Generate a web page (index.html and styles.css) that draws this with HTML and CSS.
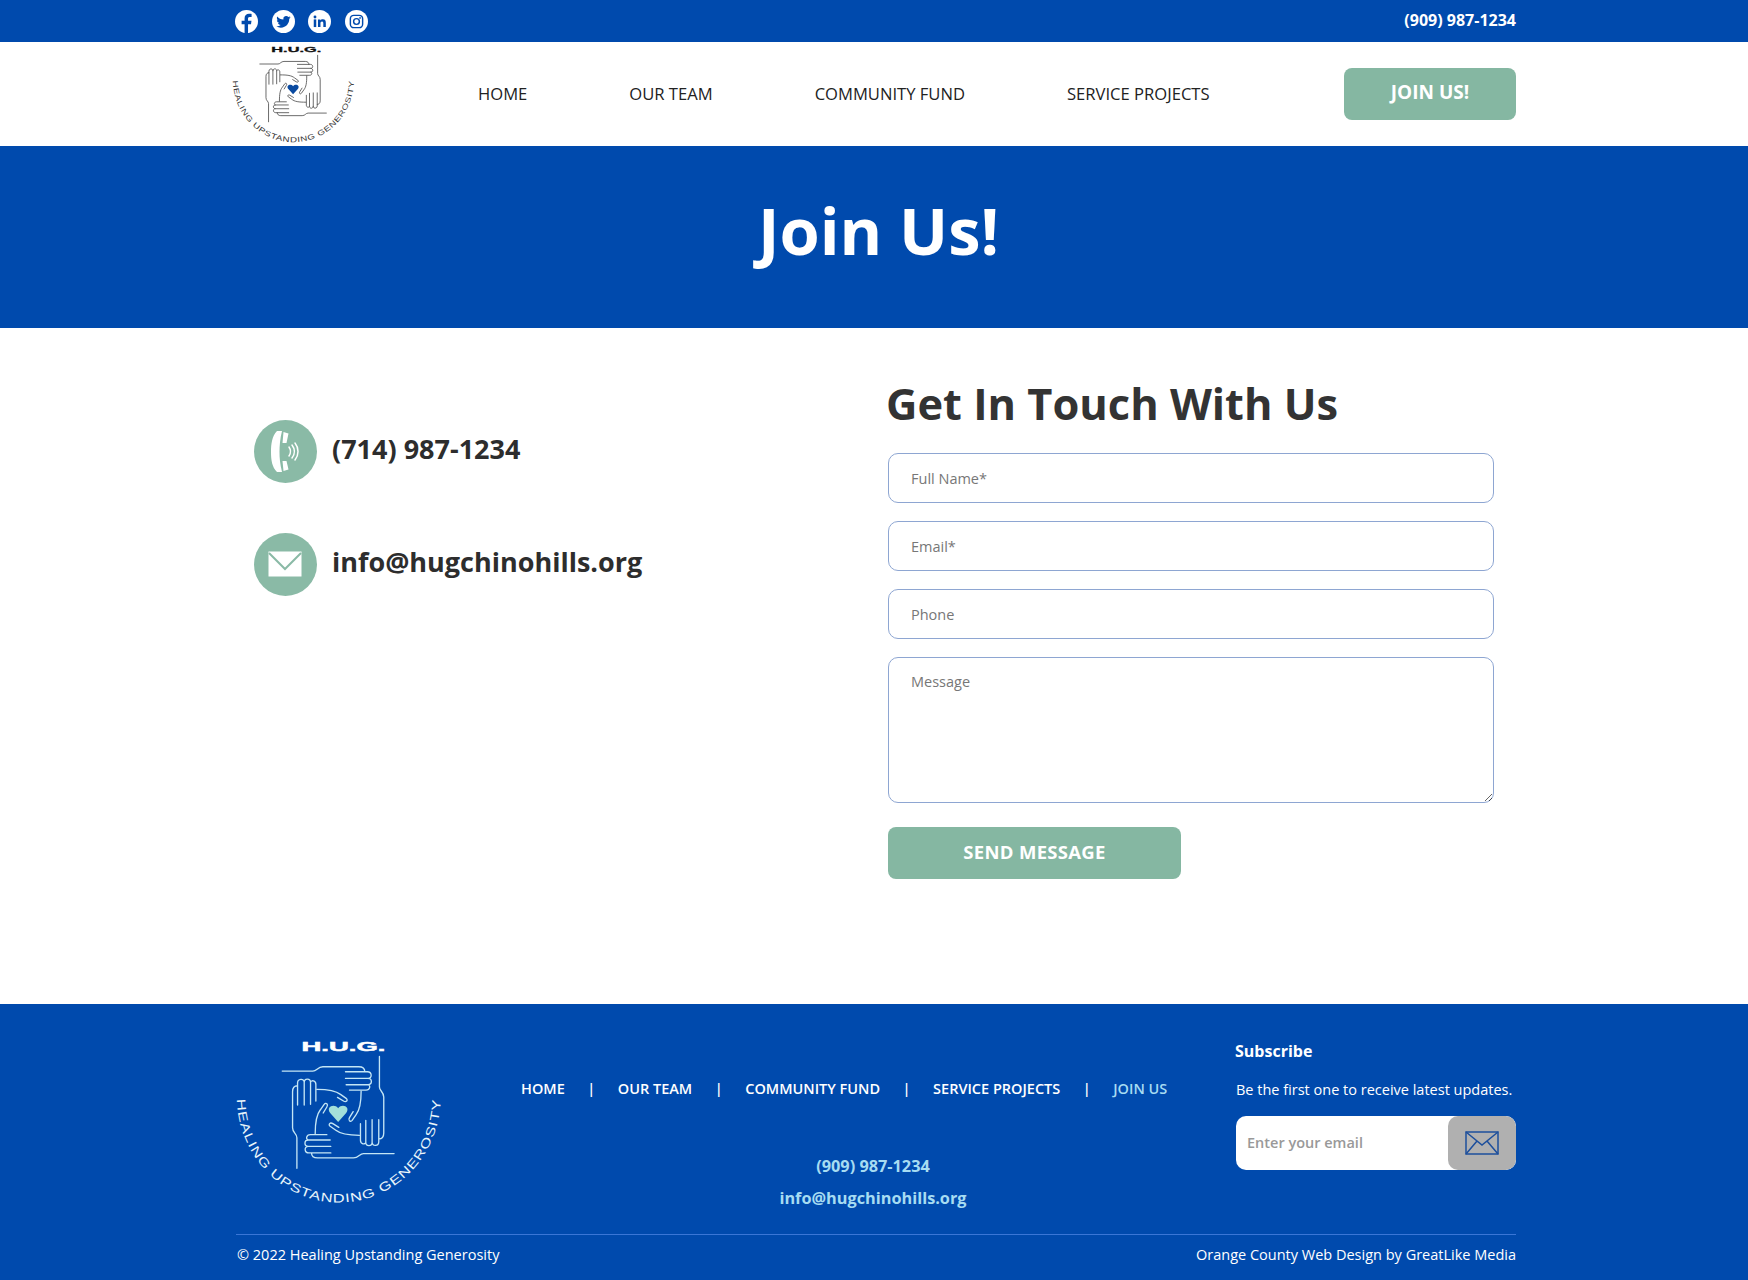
FILE: index.html
```html
<!DOCTYPE html>
<html lang="en">
<head>
<meta charset="utf-8">
<title>Join Us! | H.U.G.</title>
<link rel="stylesheet" href="styles.css">
</head>
<body>
<div class="topbar">
  <div class="container topbar-inner">
    <div class="socials">
      <a class="social" href="#"><svg viewBox="0 0 24 24"><circle cx="12" cy="12" r="12" fill="#fff"/><path fill="#004aad" d="M13.6 24v-9.2h3.1l.5-3.6h-3.6V9.1c0-1 .3-1.8 1.8-1.8h1.9V4.1c-.4 0-1.5-.1-2.7-.1-2.7 0-4.6 1.7-4.6 4.7v2.5H6.9v3.6H10V24z"/></svg></a>
      <a class="social" href="#"><svg viewBox="0 0 24 24"><circle cx="12" cy="12" r="12" fill="#fff"/><g transform="translate(4.5 4.8) scale(.625)"><path fill="#004aad" d="M23.953 4.57a10 10 0 01-2.825.775 4.958 4.958 0 002.163-2.723c-.951.555-2.005.959-3.127 1.184a4.92 4.92 0 00-8.384 4.482C7.69 8.095 4.067 6.13 1.64 3.162a4.822 4.822 0 00-.666 2.475c0 1.71.87 3.213 2.188 4.096a4.904 4.904 0 01-2.228-.616v.06a4.923 4.923 0 003.946 4.827 4.996 4.996 0 01-2.212.085 4.936 4.936 0 004.604 3.417 9.867 9.867 0 01-6.102 2.105c-.39 0-.779-.023-1.17-.067a13.995 13.995 0 007.557 2.209c9.053 0 13.998-7.496 13.998-13.985 0-.21 0-.42-.015-.63A9.935 9.935 0 0024 4.59z"/></g></svg></a>
      <a class="social" href="#"><svg viewBox="0 0 24 24"><circle cx="12" cy="12" r="12" fill="#fff"/><g fill="#004aad"><rect x="6" y="9.8" width="2.6" height="8"/><circle cx="7.3" cy="7.3" r="1.5"/><path d="M10.4 9.8h2.5v1.1c.4-.7 1.3-1.3 2.6-1.3 2.6 0 3.1 1.7 3.1 3.9v4.3H16v-3.8c0-1-.1-2.1-1.3-2.1-1.3 0-1.7 1-1.7 2.1v3.8h-2.6z"/></g></svg></a>
      <a class="social" href="#"><svg viewBox="0 0 24 24"><circle cx="12" cy="12" r="12" fill="#fff"/><g fill="none" stroke="#004aad" stroke-width="1.5"><rect x="5.6" y="5.6" width="12.8" height="12.8" rx="3.6"/><circle cx="12" cy="12" r="3"/></g><circle cx="15.7" cy="8.3" r=".9" fill="#004aad"/></svg></a>
    </div>
    <a class="top-phone" href="#">(909) 987-1234</a>
  </div>
</div>

<header class="header">
  <div class="container header-inner">
    <svg class="logo logo-dark" viewBox="10 30 640 480">
      <defs>
        <g id="hand" fill="none" stroke="currentColor" stroke-width="4" stroke-linecap="round" stroke-linejoin="round">
          <path d="M170 126H262C274 126 276 113 292 113H400C412 113 418 120 418 128H360M418 128H426C440 128 441 148 428 148H360M428 148C441 148 441 167 428 167H362M428 167C436 169 434 183 422 183H372"/>
          <path d="M274 181C310 181 330 184 345 196L362 208C369 214 362 221 354 216L336 205"/>
        </g>
        <path id="arc-a" d="M34 205A306 316 0 0 0 646 205"/>
      </defs>
      <text class="logo-title" x="228" y="67" textLength="252" lengthAdjust="spacingAndGlyphs">H.U.G.</text>
      <use href="#hand"/>
      <use href="#hand" transform="rotate(90 338 250)"/>
      <use href="#hand" transform="rotate(180 338 250)"/>
      <use href="#hand" transform="rotate(270 338 250)"/>
      <path class="logo-heart" d="M338 279L314 252C300 234 326 222 338 238C350 222 376 234 362 252Z"/>
      <text class="logo-arc"><textPath href="#arc-a" textLength="965" lengthAdjust="spacingAndGlyphs" startOffset="6">HEALING UPSTANDING GENEROSITY</textPath></text>
    </svg>
    <nav class="main-nav">
      <a href="#">HOME</a>
      <a href="#">OUR TEAM</a>
      <a href="#">COMMUNITY FUND</a>
      <a href="#">SERVICE PROJECTS</a>
    </nav>
    <a class="join-btn" href="#">JOIN US!</a>
  </div>
</header>

<section class="hero"><h1>Join Us!</h1></section>

<main class="container main">
  <div class="contact">
    <div class="contact-row">
      <svg class="contact-icon" viewBox="0 0 63 63"><circle cx="31.5" cy="31.5" r="31.5" fill="#8abaa6"/><path fill="#fff" d="M23 11C18 16 17 24 17 32S18 47 23 52L28 52C26 44 25.500 38 25.500 32S26 19 28 11Z"/><path fill="#fff" d="M29.500 12L34.500 13.500 32.500 23 28.500 23ZM29.500 51L34.500 49.500 32.500 41 28.500 41Z"/><g fill="none" stroke="#fff" stroke-width="1.500" stroke-linecap="round"><path d="M35 27C37 30 37 33 35 36"/><path d="M38 25C41 29 41 34 38 38"/><path d="M41 23C45 28 45 35 41 40"/></g></svg>
      <a class="contact-text" href="#">(714) 987-1234</a>
    </div>
    <div class="contact-row">
      <svg class="contact-icon" viewBox="0 0 63 63"><circle cx="31.5" cy="31.5" r="31.5" fill="#8abaa6"/><rect x="14.5" y="18.500" width="33" height="25" fill="#fff"/><path d="M15 20L31 36 47 20" fill="none" stroke="#8abaa6" stroke-width="2"/></svg>
      <a class="contact-text" href="#">info@hugchinohills.org</a>
    </div>
  </div>
  <div class="form-col">
    <h2>Get In Touch With Us</h2>
    <form class="form">
      <input class="field" type="text" placeholder="Full Name*">
      <input class="field" type="email" placeholder="Email*">
      <input class="field" type="tel" placeholder="Phone">
      <textarea class="field field-area" placeholder="Message"></textarea>
      <button class="send-btn" type="button">SEND MESSAGE</button>
    </form>
  </div>
</main>

<footer class="footer">
  <div class="container footer-top">
    <svg class="footer-logo logo-light" viewBox="10 30 640 480">
      <text class="logo-title" x="228" y="67" textLength="252" lengthAdjust="spacingAndGlyphs">H.U.G.</text>
      <use href="#hand"/>
      <use href="#hand" transform="rotate(90 338 250)"/>
      <use href="#hand" transform="rotate(180 338 250)"/>
      <use href="#hand" transform="rotate(270 338 250)"/>
      <path class="logo-heart" d="M338 279L314 252C300 234 326 222 338 238C350 222 376 234 362 252Z"/>
      <text class="logo-arc"><textPath href="#arc-a" textLength="965" lengthAdjust="spacingAndGlyphs" startOffset="6">HEALING UPSTANDING GENEROSITY</textPath></text>
    </svg>
    <div class="footer-center">
      <nav class="footer-nav">
        <a href="#">HOME</a><span>|</span>
        <a href="#">OUR TEAM</a><span>|</span>
        <a href="#">COMMUNITY FUND</a><span>|</span>
        <a href="#">SERVICE PROJECTS</a><span>|</span>
        <a class="active" href="#">JOIN US</a>
      </nav>
      <div class="footer-contact">
        <a href="#">(909) 987-1234</a>
        <a href="#">info@hugchinohills.org</a>
      </div>
    </div>
    <div class="subscribe">
      <h3>Subscribe</h3>
      <p>Be the first one to receive latest updates.</p>
      <div class="sub-form">
        <input class="sub-input" type="email" placeholder="Enter your email">
        <button class="sub-btn" type="button"><svg viewBox="0 0 34 24"><g fill="none" stroke="#1d4f9c" stroke-width="1.5"><rect x="1" y="1" width="32" height="22"/><path d="M1 1L17 14 33 1M1 23L12 10M33 23L22 10"/></g></svg></button>
      </div>
    </div>
  </div>
  <div class="container footer-bottom">
    <span>© 2022 Healing Upstanding Generosity</span>
    <span>Orange County Web Design by GreatLike Media</span>
  </div>
</footer>
</body>
</html>
```
FILE: styles.css
```css
* { box-sizing: border-box; }
html, body { margin: 0; padding: 0; }
body { font-family: "Open Sans", "Noto Sans", sans-serif; color: #333; background: #fff; }
a { color: inherit; text-decoration: none; }
.container { width: 1280px; margin-left: 236px; }

.topbar { background: #004aad; height: 42px; }
.topbar-inner { height: 100%; display: flex; align-items: center; justify-content: space-between; }
.socials { display: flex; gap: 13.5px; margin-left: -1px; }
.social { display: block; width: 23px; height: 23px; }
.social svg { display: block; width: 23px; height: 23px; }
.top-phone { color: #fff; font-size: 16px; font-weight: 700; margin-top: -3px; }

.header { height: 104px; background: #fff; }
.header-inner { display: flex; align-items: center; height: 100%; }
.logo { width: 127px; height: 95px; margin: -4px 0 0 -8px; flex: none; overflow: visible; }
.logo-dark { color: #444; }
.logo-light { color: #c4e6f5; }
.logo-title { font-family: "Liberation Sans", sans-serif; font-weight: 700; font-size: 40px; stroke-width: 1.5px; }
.logo-arc { font-family: "Liberation Sans", sans-serif; font-size: 37px; letter-spacing: 2px; }
.logo-dark .logo-title { fill: #111; stroke: #111; }
.logo-dark .logo-arc { fill: #333; }
.logo-dark .logo-heart { fill: #0a4aa0; }
.logo-light .logo-title { fill: #fff; stroke: #fff; }
.logo-light .logo-arc { fill: #eaf6fb; }
.logo-light .logo-heart { fill: #a3e0da; }

.main-nav { display: flex; gap: 102px; margin: -2px 0 0 123px; font-size: 16.6px; font-weight: 500; color: #222; }
.join-btn { margin-left: auto; width: 172px; height: 52px; background: #85b7a2; border-radius: 8px; color: #fff; font-size: 19px; font-weight: 700; display: flex; align-items: center; justify-content: center; padding-bottom: 5px; }

.hero { height: 182px; background: #004aad; display: flex; align-items: center; justify-content: center; }
.hero h1 { margin: 0 0 15px 9px; color: #fff; font-size: 65px; font-weight: 700; line-height: 1.2; }

.main { display: flex; padding-bottom: 125px; }
.contact { width: 651px; padding: 92px 0 0 18px; flex: none; }
.contact-row { display: flex; align-items: center; gap: 15px; margin-bottom: 50px; }
.contact-icon { width: 63px; height: 63px; flex: none; display: block; }
.contact-text { font-size: 27px; font-weight: 700; color: #2d2d2d; margin-top: -6px; }

.form-col { flex: 1; padding: 47px 0 0 0; }
.form-col h2 { margin: 0 0 21px -1px; font-size: 43.4px; font-weight: 700; line-height: 57px; color: #333; }
.form { margin-left: 1px; display: flex; flex-direction: column; align-items: flex-start; }
.field { display: block; width: 606px; height: 50px; margin-bottom: 18px; border: 1px solid #8ea6d2; border-radius: 10px; padding: 1px 22px 0; font: 14.5px "Open Sans", sans-serif; color: #333; background: #fff; outline: none; }
.field::placeholder { color: #777; opacity: 1; }
.field-area { height: 146px; padding-top: 14px; margin-bottom: 24px; }
.send-btn { width: 293px; height: 52px; background: #85b7a2; border: 0; border-radius: 8px; color: #fff; font: 700 18.5px "Open Sans", sans-serif; letter-spacing: .3px; padding-bottom: 5px; }

.footer { background: #004aad; color: #fff; }
.footer-top { display: flex; height: 231px; border-bottom: 1px solid #3a76d6; }
.footer-logo { width: 213px; height: 160px; margin: 35px 0 0 -7px; flex: none; overflow: visible; }
.footer-center { width: 704px; margin-left: 79px; padding-top: 75px; flex: none; }
.footer-nav { display: flex; gap: 22.5px; font-size: 14.5px; font-weight: 600; line-height: 20px; white-space: nowrap; }
.footer-nav .active { color: #a6dcf2; }
.footer-contact { margin-top: 51px; display: flex; flex-direction: column; align-items: center; color: #a6dcf2; font-size: 16.3px; font-weight: 700; line-height: 32px; }
.subscribe { width: 280px; margin-left: 11px; padding-top: 36px; flex: none; }
.subscribe h3 { margin: 0 0 18px -1px; font-size: 16px; font-weight: 700; line-height: 22px; }
.subscribe p { margin: 0 0 16px; font-size: 14.5px; line-height: 20px; white-space: nowrap; }
.sub-form { display: flex; height: 54px; background: #fff; border-radius: 10px; overflow: hidden; }
.sub-input { flex: 1; min-width: 0; border: 0; background: none; outline: none; padding: 0 0 2px 11px; font: 600 14.5px "Open Sans", sans-serif; color: #333; }
.sub-input::placeholder { color: #999; opacity: 1; }
.sub-btn { width: 68px; border: 0; padding: 0; background: #b0b0b0; border-radius: 10px; display: flex; align-items: center; justify-content: center; }
.sub-btn svg { width: 34px; height: 24px; display: block; }
.footer-bottom { display: flex; justify-content: space-between; align-items: center; height: 45px; font-size: 14.5px; padding: 0 0 7px 1px; }
```
